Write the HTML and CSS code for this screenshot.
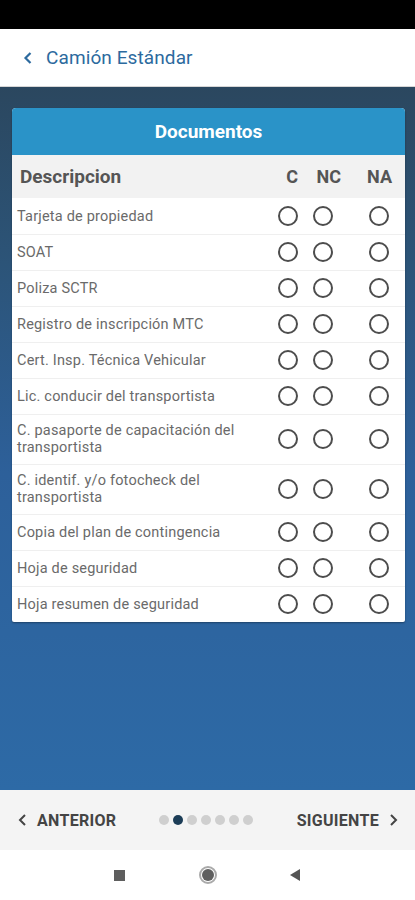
FILE: index.html
```html
<!DOCTYPE html>
<html lang="es">
<head>
<meta charset="utf-8">
<title>Camión Estándar</title>
<link rel="stylesheet" href="styles.css">
</head>
<body>
<div class="screen">
  <div class="statusbar"></div>
  <header class="appbar">
    <svg class="back" width="10" height="14" viewBox="0 0 10 14"><path d="M7.5 2 L2.5 7 L7.5 12" fill="none" stroke="#2c6a9e" stroke-width="2.2"/></svg>
    <span class="apptitle">Camión Estándar</span>
  </header>
  <main class="content">
    <section class="card">
      <div class="card-title">Documentos</div>
      <div class="thead">
        <span class="th-desc">Descripcion</span>
        <span class="th">C</span>
        <span class="th">NC</span>
        <span class="th">NA</span>
      </div>
      <div class="row"><span class="desc">Tarjeta de propiedad</span><span class="radio"></span><span class="radio"></span><span class="radio na"></span></div>
      <div class="row"><span class="desc">SOAT</span><span class="radio"></span><span class="radio"></span><span class="radio na"></span></div>
      <div class="row"><span class="desc">Poliza SCTR</span><span class="radio"></span><span class="radio"></span><span class="radio na"></span></div>
      <div class="row"><span class="desc">Registro de inscripción MTC</span><span class="radio"></span><span class="radio"></span><span class="radio na"></span></div>
      <div class="row"><span class="desc">Cert. Insp. Técnica Vehicular</span><span class="radio"></span><span class="radio"></span><span class="radio na"></span></div>
      <div class="row"><span class="desc">Lic. conducir del transportista</span><span class="radio"></span><span class="radio"></span><span class="radio na"></span></div>
      <div class="row"><span class="desc">C. pasaporte de capacitación del transportista</span><span class="radio"></span><span class="radio"></span><span class="radio na"></span></div>
      <div class="row"><span class="desc">C. identif. y/o fotocheck del transportista</span><span class="radio"></span><span class="radio"></span><span class="radio na"></span></div>
      <div class="row"><span class="desc">Copia del plan de contingencia</span><span class="radio"></span><span class="radio"></span><span class="radio na"></span></div>
      <div class="row"><span class="desc">Hoja de seguridad</span><span class="radio"></span><span class="radio"></span><span class="radio na"></span></div>
      <div class="row"><span class="desc">Hoja resumen de seguridad</span><span class="radio"></span><span class="radio"></span><span class="radio na"></span></div>
    </section>
  </main>
  <nav class="pager">
    <span class="pbtn prev"><svg width="9" height="14" viewBox="0 0 9 14"><path d="M7 2 L2 7 L7 12" fill="none" stroke="#444" stroke-width="2"/></svg>ANTERIOR</span>
    <span class="dots"><i class="dot"></i><i class="dot on"></i><i class="dot"></i><i class="dot"></i><i class="dot"></i><i class="dot"></i><i class="dot"></i></span>
    <span class="pbtn next">SIGUIENTE<svg width="9" height="14" viewBox="0 0 9 14"><path d="M2 2 L7 7 L2 12" fill="none" stroke="#444" stroke-width="2"/></svg></span>
  </nav>
  <div class="sysnav">
    <span class="sq"></span>
    <span class="home"><span class="home-in"></span></span>
    <svg class="tri" width="12" height="14" viewBox="0 0 12 14"><path d="M11 1 L1 7 L11 13 Z" fill="#555"/></svg>
  </div>
</div>
</body>
</html>
```
FILE: styles.css
```css
* { box-sizing: border-box; }
html, body { margin: 0; padding: 0; }
body {
  font-family: Roboto, "Noto Sans", "Liberation Sans", sans-serif;
  background: #fff;
}
.screen {
  width: 415px;
  height: 900px;
  display: flex;
  flex-direction: column;
  overflow: hidden;
}
.statusbar {
  height: 29px;
  background: #000;
  flex: none;
}
.appbar {
  height: 58px;
  flex: none;
  background: #fff;
  border-bottom: 1px solid #d6d6d6;
  display: flex;
  align-items: center;
  padding-left: 23px;
  gap: 13px;
}
.apptitle {
  font-size: 19px;
  color: #2c6a9e;
  letter-spacing: 0.1px;
}
.content {
  flex: 1;
  background: linear-gradient(180deg, #2b475f 0%, #2c5478 25%, #2d609a 55%, #2d6aa6 100%);
  padding: 21px 10px 0 12px;
}
.card {
  background: #fff;
  border-radius: 4px 4px 2px 2px;
  overflow: hidden;
  box-shadow: 0 1px 2px rgba(0,0,0,0.35);
}
.card-title {
  height: 47px;
  background: #2a93c8;
  color: #fff;
  font-weight: 700;
  font-size: 19px;
  display: flex;
  align-items: center;
  justify-content: center;
}
.thead {
  height: 43px;
  background: #f2f2f2;
  display: grid;
  grid-template-columns: 1fr 20px 43px 51px;
  align-items: center;
  padding: 0 13px 0 8px;
  color: #555;
  font-weight: 700;
}
.th-desc { font-size: 19px; }
.th { font-size: 18px; justify-self: end; }
.row {
  display: grid;
  grid-template-columns: 1fr 20px 20px 41px;
  column-gap: 15px;
  align-items: center;
  padding: 7.5px 16px 7.5px 5px;
  border-top: 1px solid #efefef;
}
.thead + .row { border-top: none; padding-top: 8px; }
.desc {
  font-size: 14.5px;
  line-height: 17px;
  color: #6a6a6a;
  letter-spacing: 0.2px;
}
.radio {
  width: 20px;
  height: 20px;
  border: 2px solid #4d4d4d;
  border-radius: 50%;
}
.radio.na { justify-self: end; }
.pager {
  height: 60px;
  flex: none;
  background: #f4f4f4;
  display: grid;
  grid-template-columns: 1fr auto 1fr;
  align-items: center;
  padding: 0 17px 0 18px;
}
.pbtn {
  display: flex;
  align-items: center;
  gap: 10px;
  font-size: 16px;
  font-weight: 700;
  color: #444;
  letter-spacing: 0.3px;
}
.next { justify-self: end; }
.dots {
  display: flex;
  gap: 4px;
  margin-right: 4px;
}
.dot {
  width: 10px;
  height: 10px;
  border-radius: 50%;
  background: #cfcfcf;
}
.dot.on { background: #1c3d57; }
.sysnav {
  height: 50px;
  flex: none;
  background: #fff;
  display: flex;
  align-items: center;
  justify-content: center;
  gap: 74px;
}
.sq {
  width: 11px;
  height: 11px;
  background: #5e5e5e;
}
.home {
  width: 18px;
  height: 18px;
  border-radius: 50%;
  border: 2px solid #aaa;
  display: flex;
  align-items: center;
  justify-content: center;
}
.home-in {
  width: 12px;
  height: 12px;
  border-radius: 50%;
  background: #5e5e5e;
}
.tri { margin-left: -2px; }
```
